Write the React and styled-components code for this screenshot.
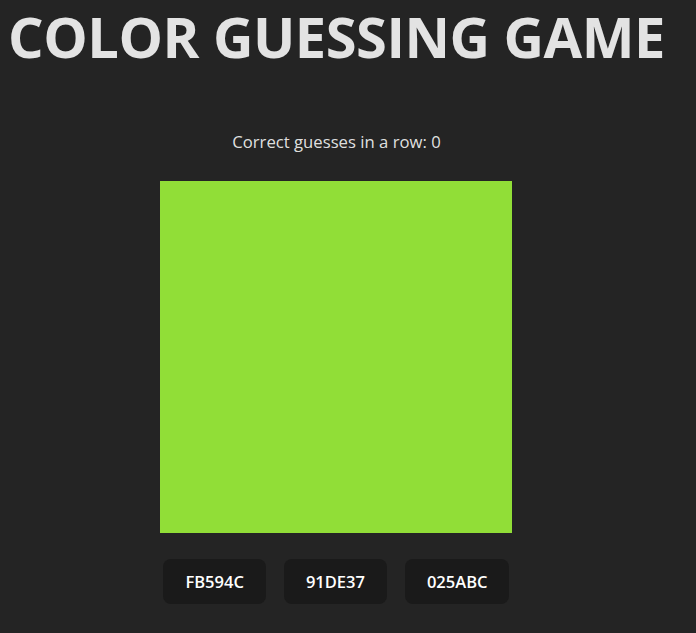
import React, { useState } from "react";
import styled, { createGlobalStyle } from "styled-components";

const Global = createGlobalStyle`
  html, body { margin: 0; padding: 0; background: #242424; }
  body {
    font-family: "Open Sans", "Noto Sans", sans-serif;
    color: rgba(255,255,255,0.87);
    -webkit-font-smoothing: antialiased;
  }
`;

const Page = styled.div`
  padding: 0 8px;
`;

const Game = styled.div`
  display: inline-flex;
  flex-direction: column;
  align-items: center;
`;

const Title = styled.h1`
  margin: 0.4px 0 0;
  font-size: 56px;
  line-height: 1.3;
  font-weight: 700;
  letter-spacing: -0.5px;
  color: #e3e3e3;
  white-space: nowrap;
`;

const Streak = styled.p`
  margin: 58.8px 0 0;
  font-size: 16.7px;
  line-height: 20px;
`;

const Swatch = styled.div`
  margin-top: 29px;
  width: 352px;
  height: 352px;
  background: ${(p) => p.$color};
`;

const Choices = styled.div`
  display: flex;
  gap: 18px;
  margin-top: 26px;
`;

const Choice = styled.button`
  border: 1px solid transparent;
  border-radius: 8px;
  padding: 0 21px;
  height: 45px;
  background: #1a1a1a;
  color: #fff;
  font-family: inherit;
  font-size: 16.5px;
  font-weight: 600;
  cursor: pointer;
`;

export default function App() {
  const [streak] = useState(0);
  const options = ["FB594C", "91DE37", "025ABC"];
  return (
    <Page>
      <Global />
      <Game>
        <Title>COLOR GUESSING GAME</Title>
        <Streak>Correct guesses in a row: {streak}</Streak>
        <Swatch $color="#91DE37" />
        <Choices>
          {options.map((o) => (
            <Choice key={o}>{o}</Choice>
          ))}
        </Choices>
      </Game>
    </Page>
  );
}
